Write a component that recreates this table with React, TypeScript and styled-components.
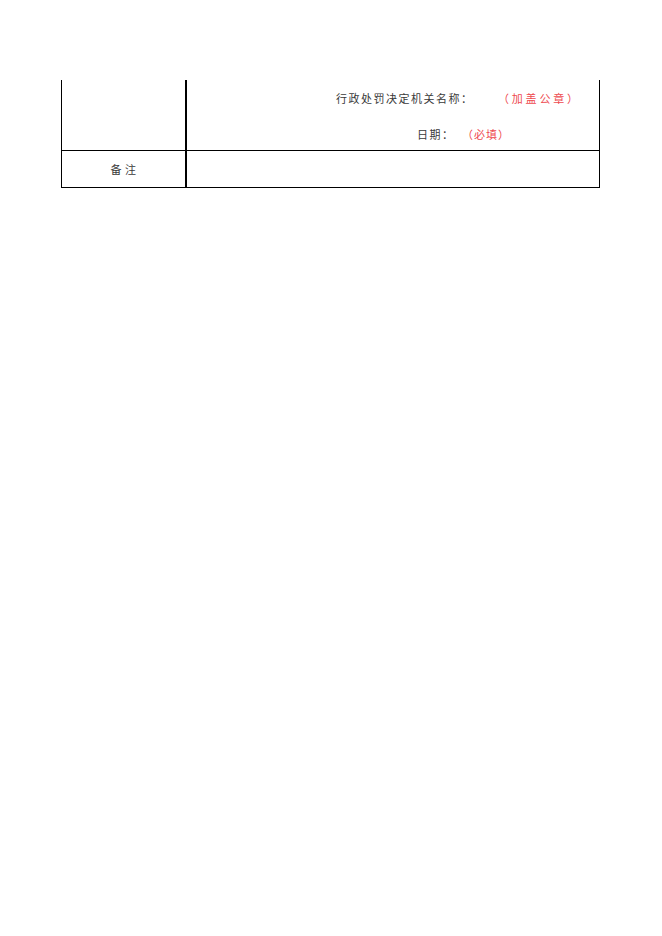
import React from "react";
import styled, { createGlobalStyle } from "styled-components";

const Global = createGlobalStyle`
  html, body {
    margin: 0;
    padding: 0;
    background: #ffffff;
  }
  body {
    font-family: "Noto Sans CJK SC", "Noto Sans", sans-serif;
  }
`;

const Page = styled.div`
  width: 662px;
  min-height: 936px;
  box-sizing: border-box;
  padding: 80px 0 0 61px;
  background: #ffffff;
`;

const Table = styled.div`
  width: 539px;
  box-sizing: border-box;
  border-left: 1px solid #000;
  border-right: 1px solid #000;
  border-bottom: 1.5px solid #000;
`;

const Row = styled.div<{ $height: number; $last?: boolean }>`
  display: grid;
  grid-template-columns: 125px 1fr;
  height: ${(p) => p.$height}px;
  box-sizing: border-box;
  border-bottom: ${(p) => (p.$last ? "none" : "1px solid #000")};
`;

const LabelCell = styled.div`
  border-right: 2px solid #000;
  display: flex;
  align-items: center;
  justify-content: center;
  padding-left: 3px;
  font-size: 11px;
  letter-spacing: 3.5px;
  color: #3a3a3a;
`;

const ContentCell = styled.div`
  display: flex;
  flex-direction: column;
  padding-top: 9px;
  gap: 18px;
`;

const Line = styled.div<{ $indent: number }>`
  padding-left: ${(p) => p.$indent}px;
  height: 18px;
  line-height: 18px;
  font-size: 11px;
  white-space: nowrap;
`;

const Dark = styled.span`
  color: #3a3a3a;
  letter-spacing: 1.5px;
`;

const Red = styled.span<{ $gap: number; $spacing: number }>`
  color: #ee4a4f;
  margin-left: ${(p) => p.$gap}px;
  letter-spacing: ${(p) => p.$spacing}px;
`;

export default function App() {
  return (
    <>
      <Global />
      <Page>
        <Table>
          <Row $height={71}>
            <LabelCell />
            <ContentCell>
              <Line $indent={149}>
                <Dark>行政处罚决定机关名称：</Dark>
                <Red $gap={30} $spacing={2.8}>（加盖公章）</Red>
              </Line>
              <Line $indent={230}>
                <Dark>日期：</Dark>
                <Red $gap={13} $spacing={1}>（必填）</Red>
              </Line>
            </ContentCell>
          </Row>
          <Row $height={36} $last>
            <LabelCell>备注</LabelCell>
            <ContentCell />
          </Row>
        </Table>
      </Page>
    </>
  );
}
